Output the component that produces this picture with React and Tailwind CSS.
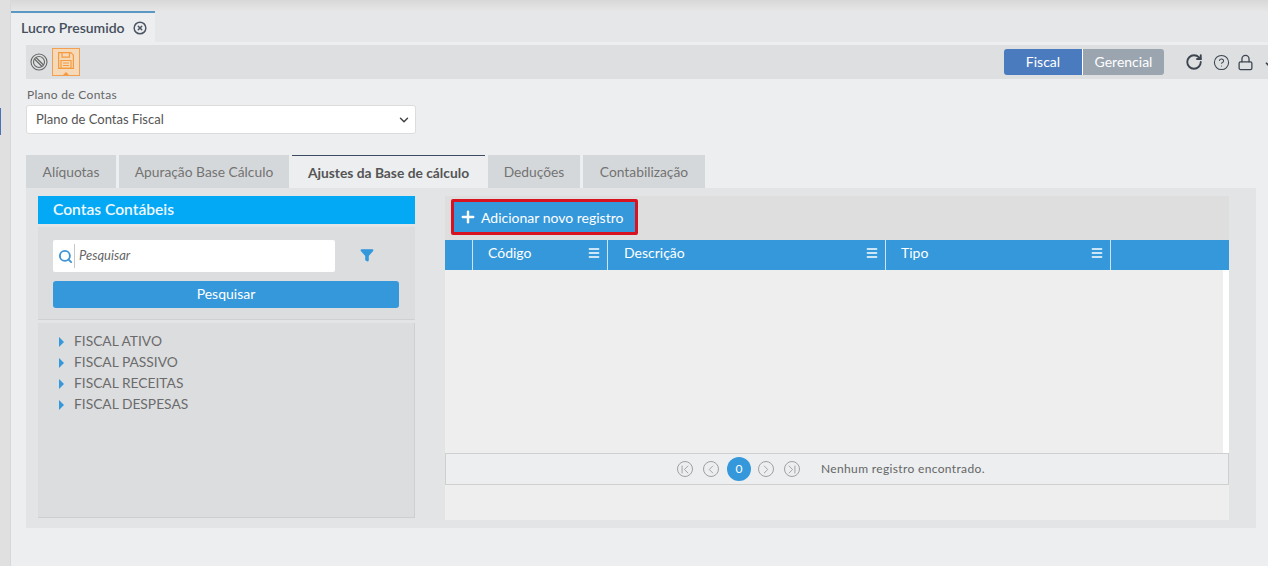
import { Plus, Menu, RotateCw, CircleHelp, Lock, ChevronDown, Search, Funnel, ChevronFirst, ChevronLeft, ChevronRight, ChevronLast, CircleX } from 'lucide-react'

const tabs = [
  { label: 'Alíquotas', w: 'w-[90px]' },
  { label: 'Apuração Base Cálculo', w: 'w-[170px]' },
  { label: 'Ajustes da Base de cálculo', w: 'w-[193px]', active: true },
  { label: 'Deduções', w: 'w-[92px]' },
  { label: 'Contabilização', w: 'w-[122px]' },
]

const contas = ['FISCAL ATIVO', 'FISCAL PASSIVO', 'FISCAL RECEITAS', 'FISCAL DESPESAS']

function Tab({ label, w, active }) {
  if (active) {
    return (
      <div className={`${w} h-[34px] bg-[#eceef0] border-t border-[#3c4a63] flex items-center justify-center pt-[1px] text-[13.8px] font-bold text-[#555]`}>
        {label}
      </div>
    )
  }
  return (
    <div className={`${w} h-[33px] bg-[#d5d8da] flex items-center justify-center pt-[1px] text-[13.8px] text-[#737373]`}>
      {label}
    </div>
  )
}

function HeadCell({ w, label, pad = 'pl-[15px]', menu = true }) {
  return (
    <div className={`${w} h-full flex items-center justify-between border-r border-[#cfe3f3] ${pad} pr-[6px] pb-[6px] text-[14px] text-white`}>
      <span>{label}</span>
      {menu && <Menu size={14} strokeWidth={2.5} className="text-white mt-[2px]" />}
    </div>
  )
}

function PagerBtn({ Icon }) {
  return (
    <div className="w-4 h-4 rounded-full border border-[#a0a0a0] flex items-center justify-center text-[#999]">
      <Icon size={15} strokeWidth={1.5} />
    </div>
  )
}

export default function App() {
  return (
    <div className="h-[566px] w-[1268px] overflow-hidden flex bg-[#e4e5e6] font-['Lato',sans-serif]">
      <div className="w-[11px] shrink-0 pt-[108px] bg-[#e0e0e0] border-r border-[#d8d8d8]">
        <div className="w-px h-[27px] bg-[#4a72b8]" />
      </div>
      <div className="flex-1 min-w-0 flex flex-col">
        {/* aba do topo */}
        <div className="h-[11px] bg-gradient-to-b from-[#d8d8d8] to-[#e6e6e6]" />
        <div className="h-[31px] bg-[#e6e7e8] flex">
          <div className="w-[144px] bg-[#eceef0] border-t-2 border-[#5b98c4] flex items-center pl-[10px] gap-2 text-[14px] font-semibold text-[#454f5b]">
            Lucro Presumido
            <CircleX size={14} strokeWidth={2.5} className="text-[#4b5563]" />
          </div>
        </div>
        <div className="flex-1 bg-[#eceef0] pl-[15px] pt-[3px] flex flex-col">
          {/* barra de ferramentas */}
          <div className="h-[34px] bg-[#dedfe0] flex items-center pl-[4px]">
            <svg width="18" height="18" viewBox="0 0 18 18" fill="none" stroke="#666" strokeWidth="1.1">
              <circle cx="9" cy="9" r="8" />
              <circle cx="9" cy="9" r="5.5" />
              <path d="M4.5 6 12 13.5M6 4.5l7.5 7.5" />
            </svg>
            <div className="relative ml-[4px] w-7 h-7 bg-[#f5d9b8] border border-[#f0a050] flex items-center justify-center">
              <svg width="16" height="17" viewBox="0 0 16 17" fill="none" stroke="#f49a3f" strokeWidth="1.2" className="-mt-[3px]">
                <path d="M.6.6h12.2l2.6 2.6v13.2H.6z" />
                <path d="M4 .6v4.6h7.5V.6M3 8.5h10v7.9H3zM5 11h6M5 13.5h6" />
              </svg>
              <div className="absolute bottom-0 left-[10px] w-0 h-0 border-x-[3px] border-x-transparent border-b-[3px] border-b-[#f49a3f]" />
            </div>
            <div className="ml-auto flex items-center">
              <div className="w-[79px] h-[26px] bg-[#4b7bbf] rounded-l-[3px] border-r border-white flex items-center justify-center pb-[1px] text-[14px] text-white">Fiscal</div>
              <div className="w-[81px] h-[26px] bg-[#9aa5b0] rounded-r-[3px] flex items-center justify-center pb-[1px] text-[14px] text-white">Gerencial</div>
              <RotateCw size={18} strokeWidth={2.5} className="ml-[21px] text-[#3c4550]" />
              <CircleHelp size={17} strokeWidth={1.5} className="ml-[10px] text-[#3c4550]" />
              <Lock size={17} strokeWidth={1.8} className="ml-[7px] text-[#3c4550]" />
              <ChevronDown size={14} strokeWidth={3} className="ml-[9px] -mr-[9px] mt-[6px] text-[#3c4550]" />
            </div>
          </div>

          <label className="mt-[8px] ml-px text-[12px] leading-[15px] text-[#666] tracking-[0.3px]">Plano de Contas</label>
          <div className="mt-[3px] w-[390px] h-[29px] bg-white border border-[#dcdcdc] rounded-[3px] flex items-center justify-between pl-[9px] pr-[4px] text-[13px] text-[#555]">
            <span>Plano de Contas Fiscal</span>
            <ChevronDown size={14} strokeWidth={2.5} className="text-[#444]" />
          </div>

          {/* abas */}
          <div className="mt-[21px] flex gap-[3px] items-start h-[33px]">
            {tabs.map((t) => <Tab key={t.label} {...t} />)}
          </div>

          <div className="w-[1230px] h-[340px] bg-[#e2e4e6] pl-[12px] pt-[8px] flex">
            {/* contas contabeis */}
            <div className="w-[377px] flex flex-col">
              <div className="h-[28px] bg-[#03a9f4] pl-[15px] flex items-center text-[15.6px] font-semibold text-[#f0f8ff]">Contas Contábeis</div>
              <div className="mt-[3px] h-[93px] bg-[#dcdddf] border-b border-[#d0d0d0] pl-[15px] pt-[13px]">
                <div className="flex items-center">
                  <div className="w-[282px] h-[32px] bg-white rounded-[2px] flex items-center pl-[5px]">
                    <Search size={15} strokeWidth={3} className="text-[#3d94d6]" />
                    <div className="ml-px w-px h-6 bg-[#c8c8c8]" />
                    <span className="ml-[4px] text-[13px] italic text-[#666]">Pesquisar</span>
                  </div>
                  <Funnel size={14} className="ml-[25px] -mt-[2px] text-[#3498db] fill-[#3498db]" />
                </div>
                <div className="mt-[9px] w-[346px] h-[27px] bg-[#3498db] rounded-[3px] flex items-center justify-center pb-[2px] text-[14px] text-white">Pesquisar</div>
              </div>
              <div className="mt-[3px] h-[195px] bg-[#dcdddf] border-r border-b border-[#cdcfd1] pl-[21px] pt-[8px]">
                {contas.map((c) => (
                  <div key={c} className="h-[21px] flex items-center text-[13.8px] text-[#6b6b6b]">
                    <div className="w-0 h-0 border-y-[5px] border-y-transparent border-l-[5px] border-l-[#3498db]" />
                    <span className="ml-[10px]">{c}</span>
                  </div>
                ))}
              </div>
            </div>

            {/* grade */}
            <div className="ml-[30px] w-[784px] h-[324px] bg-[#eeeeee] flex flex-col">
              <div className="h-[44px] bg-[#dedede] flex items-center pl-[6px] pb-[2px]">
                <div className="w-[187px] h-[36px] border-[3px] border-[#d8121f] rounded-[2px] bg-[#3498db] flex items-center pl-[5px] gap-[4px] text-[14px] text-white">
                  <Plus size={18} strokeWidth={3.2} />
                  Adicionar novo registro
                </div>
              </div>
              <div className="h-[30px] bg-[#3498db] flex">
                <HeadCell w="w-[28px]" menu={false} pad="pl-0" />
                <HeadCell w="w-[135px]" label="Código" />
                <HeadCell w="w-[278px]" label="Descrição" pad="pl-[16px]" />
                <HeadCell w="w-[225px]" label="Tipo" />
              </div>
              <div className="h-[183px] flex justify-end">
                <div className="w-[6px] bg-white" />
              </div>
              <div className="h-[32px] bg-[#eceef0] border border-[#cfcfcf] flex items-center pl-[231px]">
                <PagerBtn Icon={ChevronFirst} />
                <div className="ml-[10px]"><PagerBtn Icon={ChevronLeft} /></div>
                <div className="ml-[8px] w-6 h-6 rounded-full bg-[#3498db] flex items-center justify-center text-[12px] text-white">0</div>
                <div className="ml-[7px]"><PagerBtn Icon={ChevronRight} /></div>
                <div className="ml-[10px]"><PagerBtn Icon={ChevronLast} /></div>
                <span className="ml-[21px] pb-[1px] text-[12px] text-[#666] tracking-[0.35px]">Nenhum registro encontrado.</span>
              </div>
            </div>
          </div>
        </div>
      </div>
    </div>
  )
}
